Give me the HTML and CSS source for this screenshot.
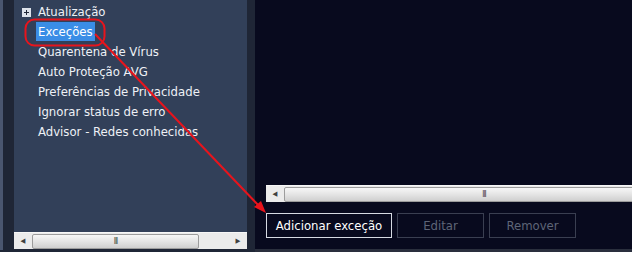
FILE: index.html
```html
<!DOCTYPE html>
<html lang="pt">
<head>
  <meta charset="UTF-8">
  <title>AVG - Exceções</title>
  <link rel="stylesheet" href="styles.css">
</head>
<body>
  <div class="window">
    <div class="edge"></div>

    <!-- Tree on the left -->
    <div class="side-frame">
      <div class="tree">
        <ul class="tree-list">
          <li class="tree-item"><svg class="expander" width="9" height="9" viewBox="0 0 9 9"><rect x="0" y="0" width="9" height="9" fill="#dde2ea"/><rect x="2" y="4" width="5" height="1" fill="#1f2636"/><rect x="4" y="2" width="1" height="5" fill="#1f2636"/></svg>Atualização</li>
          <li class="tree-item"><span class="selected">Exceções</span></li>
          <li class="tree-item">Quarentena de Vírus</li>
          <li class="tree-item">Auto Proteção AVG</li>
          <li class="tree-item">Preferências de Privacidade</li>
          <li class="tree-item">Ignorar status de erro</li>
          <li class="tree-item">Advisor - Redes conhecidas</li>
        </ul>
      </div>
      <div class="hscroll">
        <span class="arrow">&#9664;</span>
        <div class="thumb side-thumb"><span class="grip">III</span></div>
        <div class="track"></div>
        <span class="arrow">&#9654;</span>
      </div>
    </div>

    <div class="divider"></div>

    <!-- Exceptions pane -->
    <div class="main">
      <div class="list-area"></div>
      <div class="hscroll main-scroll">
        <span class="arrow">&#9664;</span>
        <div class="thumb main-thumb"><span class="grip">III</span></div>
      </div>
      <div class="buttons">
        <button class="btn btn-primary">Adicionar exceção</button>
        <button class="btn" disabled>Editar</button>
        <button class="btn" disabled>Remover</button>
      </div>
    </div>

    <!-- red annotation drawn over the window -->
    <svg class="annotation" width="636" height="255" viewBox="0 0 636 255">
      <rect x="25.5" y="19.5" width="79" height="26" rx="9" ry="9" fill="none" stroke="#e8141c" stroke-width="2"/>
      <line x1="95" y1="34" x2="260" y2="207" stroke="#e8141c" stroke-width="2"/>
      <polygon points="266,213 254,207 261,201" fill="#e8141c"/>
    </svg>
  </div>
</body>
</html>
```

FILE: styles.css
```css
* { margin: 0; padding: 0; box-sizing: border-box; }
body {
  background: #ffffff;
  font-family: "DejaVu Sans Condensed", "DejaVu Sans", sans-serif;
  font-size: 13px;
}
.window {
  position: relative;
  display: flex;
  width: 632px;
  height: 252px;
  background: #1f2636;
}
.edge { width: 3px; height: 250px; background: #4a566f; }
.side-frame {
  display: flex;
  flex-direction: column;
  width: 244px;
  padding-left: 11px;
  padding-bottom: 3px;
}
.tree { flex: 1; background: #324059; padding: 2px 0 0 24px; }
.tree-list { list-style: none; }
.tree-item {
  height: 20px;
  line-height: 20px;
  color: #eef1f6;
  white-space: nowrap;
}
.expander { margin-left: -16px; margin-right: 7px; vertical-align: -1px; }
.selected {
  display: inline-block;
  margin-left: -2px;
  padding: 0 2px;
  line-height: 19px;
  background: #3a8de6;
  color: #ffffff;
}
.hscroll {
  display: flex;
  align-items: center;
  height: 17px;
  background: #ebebeb;
  border-top: 1px solid #f7f7f7;
}
.arrow {
  flex-shrink: 0;
  width: 18px;
  text-align: center;
  font-size: 7px;
  color: #404040;
}
.thumb {
  flex-shrink: 0;
  height: 15px;
  border: 1px solid #9c9c9c;
  border-radius: 2px;
  background: linear-gradient(#f7f7f7, #e4e4e4 50%, #cfcfcf);
  text-align: center;
  font-size: 8px;
  line-height: 13px;
  color: #444;
}
.side-thumb { width: 167px; }
.track { flex: 1; }
.grip { letter-spacing: -1px; }
.divider { width: 8px; background: #1f2636; }
.main {
  display: flex;
  flex-direction: column;
  flex: 1;
  background: #080a1e;
  padding: 0 0 11px 11px;
  border-bottom: 3px solid #2a2f3d;
  overflow: hidden;
}
.list-area { height: 185px; }
.main-scroll { width: 440px; flex-shrink: 0; }
.main-thumb { width: 400px; }
.buttons { display: flex; gap: 5px; margin-top: 11px; }
.btn {
  height: 25px;
  width: 87px;
  background: transparent;
  border: 1px solid #3a3f51;
  color: #5e6577;
  font-family: inherit;
  font-size: 13px;
}
.btn-primary {
  width: 126px;
  border-color: #d6dae2;
  color: #ffffff;
}
.annotation { position: absolute; left: 0; top: 0; pointer-events: none; }
```
